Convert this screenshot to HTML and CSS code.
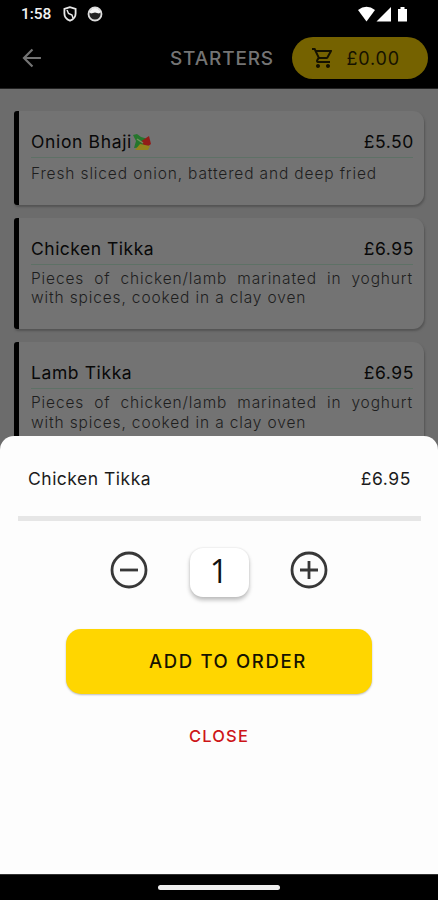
FILE: index.html
```html
<!DOCTYPE html>
<html lang="en">
<head>
<meta charset="utf-8">
<title>Starters</title>
<link rel="stylesheet" href="styles.css">
</head>
<body>
<div class="app">
  <div class="status">
    <span class="time">1:58</span>
    <svg class="shield" width="14" height="16" viewBox="0 0 14 16" fill="none" stroke="#e8e8e8" stroke-width="1.8"><path d="M7 1.200 1.400 3v4.500c0 3.400 2.200 5.900 5.600 7.200 3.400-1.300 5.600-3.800 5.600-7.200V3z"/><path d="M4 4l1.500 3.500 3.500 1.500 1 3" stroke-width="1.500"/></svg>
    <svg class="face" width="16" height="16" viewBox="0 0 16 16"><circle cx="8" cy="8" r="6.500" fill="#222" stroke="#ddd" stroke-width="1.800"/><path d="M2 6Q8-2 14 6L12 7.500 8 6.500 4 7.500z" fill="#f4f4f4"/></svg>
    <svg class="signals" width="52" height="17" viewBox="0 0 52 17" fill="#fff"><path d="M0 4Q8.500-2.500 17 4L8.500 15.500z"/><path d="M33 1v14.500H18.500z"/><path d="M40 3h2.500V1h4v2H49v12.500H40z"/></svg>
  </div>
  <header class="header">
    <svg class="back" width="20" height="20" viewBox="0 0 20 20" fill="none" stroke="#747474" stroke-width="2.200"><path d="M19 10H2M10.500 1.500 2 10l8.500 8.500"/></svg>
    <h1 class="title">STARTERS</h1>
    <div class="cart">
      <svg width="24" height="24" viewBox="0 0 24 24" fill="#151200"><path d="M15.550 13c.75 0 1.410-.41 1.750-1.030l3.580-6.490A.996.996 0 0 0 20.010 4H5.210l-.94-2H1v2h2l3.600 7.590-1.350 2.440C4.520 15.370 5.480 17 7 17h12v-2H7l1.100-2zM6.160 6h12.150l-2.760 5H8.530zM7 18c-1.100 0-1.990.9-1.990 2S5.900 22 7 22s2-.9 2-2-.9-2-2-2m10 0c-1.100 0-1.990.9-1.990 2s.89 2 1.990 2 2-.9 2-2-.9-2-2-2"/></svg>
      <span>£0.00</span>
    </div>
  </header>
  <main class="list">
    <article class="card first">
      <div class="row"><span class="name onion">Onion Bhaji<svg class="pepper" width="19" height="18" viewBox="0 0 19 18"><path d="M1 2l4-1 4 3 7 2-4 8-10 1 2-7z" fill="#25762c"/><path d="M8 9l9-6 2 8-4 3z" fill="#921c18"/><path d="M3 17l5-6 10 2-2 4z" fill="#94831c"/><path d="M5 6l6 4" stroke="#70935f" stroke-width="1.500"/></svg></span><span class="price">£5.50</span></div>
      <p class="desc">Fresh sliced onion, battered and deep fried</p>
    </article>
    <article class="card second">
      <div class="row"><span class="name">Chicken Tikka</span><span class="price">£6.95</span></div>
      <p class="desc">Pieces of chicken/lamb marinated in yoghurt with spices, cooked in a clay oven</p>
    </article>
    <article class="card third">
      <div class="row"><span class="name lamb">Lamb Tikka</span><span class="price">£6.95</span></div>
      <p class="desc">Pieces of chicken/lamb marinated in yoghurt with spices, cooked in a clay oven</p>
    </article>
  </main>
  <section class="sheet">
    <div class="summary"><span class="item">Chicken Tikka</span><span class="cost">£6.95</span></div>
    <div class="rule"></div>
    <div class="stepper">
      <svg width="38" height="38" viewBox="0 0 38 38" fill="none" stroke="#383838" stroke-width="2.800"><circle cx="19" cy="19" r="17"/><path d="M10 19h18"/></svg>
      <div class="qty">1</div>
      <svg width="38" height="38" viewBox="0 0 38 38" fill="none" stroke="#383838" stroke-width="2.800"><circle cx="19" cy="19" r="17"/><path d="M10 19h18M19 10v18"/></svg>
    </div>
    <button class="add">ADD TO ORDER</button>
    <button class="close">CLOSE</button>
  </section>
  <div class="navbar"><div class="handle"></div></div>
</div>
</body>
</html>
```
FILE: styles.css
```css
* { box-sizing: border-box; }
body { margin: 0; background: #000; font-family: Inter, "Liberation Sans", sans-serif; }
.app { width: 438px; height: 900px; display: flex; flex-direction: column; overflow: hidden; background: #000; }
.status { height: 28px; flex: none; display: flex; align-items: center; padding: 0 28px 0 21px; color: #f2f2f2; }
.time { font: 500 15.500px/28px Roboto, sans-serif; width: 42px; letter-spacing: -.1px; }
.face { margin-left: 10px; }
.signals { margin-left: auto; }
.header { height: 61px; flex: none; display: flex; align-items: center; padding: 0 10px 0 22px; border-bottom: 1px solid #222; }
.title { margin: 0 0 0 128px; width: 123px; font-size: 19px; font-weight: 500; letter-spacing: .85px; color: #747474; white-space: nowrap; }
.cart { width: 136px; height: 42px; border-radius: 21px; background: #756200; display: flex; align-items: center; padding-left: 19px; gap: 11px; color: #151200; font-size: 18px; letter-spacing: .8px; }
.list { height: 370px; flex: none; padding: 22px 14px 0; overflow: hidden; background: #6c6c6c; display: flex; flex-direction: column; }
.card { flex: none; background: #737373; border-left: 5px solid #000; border-radius: 3px 11px 11px 3px; box-shadow: 1px 2px 2px #555; padding: 17px 11px 0 12px; }
.first { height: 94px; margin-bottom: 13px; }
.second { height: 111px; margin-bottom: 13px; }
.third { height: 111px; }
.row { display: flex; justify-content: space-between; height: 30px; line-height: 28px; border-bottom: 1px solid #5e7166; font-size: 17.500px; color: #080808; }
.name { letter-spacing: .5px; display: flex; }
.onion { letter-spacing: .65px; }
.lamb { letter-spacing: .6px; }
.pepper { margin-top: 5px; }
.price { letter-spacing: .6px; margin-right: -1px; }
.desc { margin: 4px 0 0; font-size: 15.500px; line-height: 19px; font-weight: 300; color: #1e1e1e; text-align: justify; letter-spacing: .86px; }
.first .desc { margin-top: 6px; }
.third .desc { line-height: 20px; }
.sheet { height: 438px; margin-top: -23px; flex: none; background: #fdfdfd; border-radius: 14px 14px 0 0; display: flex; flex-direction: column; align-items: center; }
.summary { align-self: stretch; height: 80px; padding: 29px 27px 0 28px; display: flex; justify-content: space-between; font-size: 17.500px; line-height: 28px; color: #1b1b1b; }
.item { letter-spacing: .5px; }
.cost { letter-spacing: .6px; }
.rule { width: 403px; height: 5px; background: #e6e6e6; }
.stepper { width: 218px; height: 58px; margin-top: 20px; display: flex; justify-content: space-between; align-items: center; }
.qty { width: 59px; height: 49px; margin-top: 4px; border-radius: 13px; background: #fff; box-shadow: 0 3px 4px #bbb, 0 0 2px #ddd; text-align: center; font: 400 32px/46px "Open Sans", sans-serif; color: #111; }
.add { width: 306px; height: 65px; margin-top: 30px; border: 0; border-radius: 15px; background: #ffd600; box-shadow: 0 1px 2px #bbb; color: #161300; font: 500 18.500px/62px Inter, sans-serif; letter-spacing: 1.650px; padding: 0 0 2px 18px; }
.close { margin-top: 31px; border: 0; background: none; padding: 0; color: #cd1518; font: 500 16.500px/22px Inter, sans-serif; letter-spacing: 1.200px; }
.navbar { flex: 1; background: #000; display: flex; justify-content: center; border-top: 1px solid #333; }
.handle { width: 122px; height: 5px; margin-top: 10px; border-radius: 3px; background: #eee; }
```
